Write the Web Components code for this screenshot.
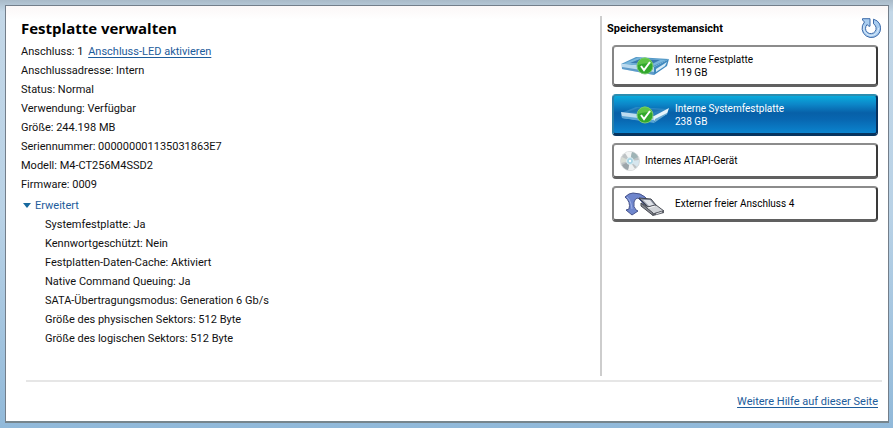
<!DOCTYPE html>
<html lang="de">
<head>
<meta charset="utf-8">
<meta name="viewport" content="width=device-width, initial-scale=1">
<title>Festplatte verwalten</title>
<style>
    html {
        height: 100%;
    }

    body {
        box-sizing: border-box;
        min-height: 100%;
        margin: 0;
        padding: 5px 4px 5px 5px;
        display: flex;
        font: 11px/19px Roboto, "Open Sans", sans-serif;
        color: #111;
        background: linear-gradient(#a9bac8, #c3d7e7 12px, #b9d2e6 50%, #91b9d9);
    }
</style>
</head>
<body>

<manage-page>
    <disk-details slot="main" heading="Festplatte verwalten">
        <detail-row>Anschluss: 1 <text-link>Anschluss-LED aktivieren</text-link></detail-row>
        <detail-row>Anschlussadresse: Intern</detail-row>
        <detail-row>Status: Normal</detail-row>
        <detail-row>Verwendung: Verfügbar</detail-row>
        <detail-row>Größe: 244.198 MB</detail-row>
        <detail-row>Seriennummer: 000000001135031863E7</detail-row>
        <detail-row>Modell: M4-CT256M4SSD2</detail-row>
        <detail-row>Firmware: 0009</detail-row>
        <expand-section slot="more" label="Erweitert">
            <detail-row>Systemfestplatte: Ja</detail-row>
            <detail-row>Kennwortgeschützt: Nein</detail-row>
            <detail-row>Festplatten-Daten-Cache: Aktiviert</detail-row>
            <detail-row>Native Command Queuing: Ja</detail-row>
            <detail-row>SATA-Übertragungsmodus: Generation 6 Gb/s</detail-row>
            <detail-row>Größe des physischen Sektors: 512 Byte</detail-row>
            <detail-row>Größe des logischen Sektors: 512 Byte</detail-row>
        </expand-section>
    </disk-details>

    <storage-view slot="side" heading="Speichersystemansicht">
        <device-tile icon="disk" size="119 GB">Interne Festplatte</device-tile>
        <device-tile icon="systemdisk" size="238 GB" selected>Interne Systemfestplatte</device-tile>
        <device-tile icon="disc">Internes ATAPI-Gerät</device-tile>
        <device-tile icon="port">Externer freier Anschluss 4</device-tile>
    </storage-view>

    <text-link slot="footer">Weitere Hilfe auf dieser Seite</text-link>
</manage-page>

<script>
const check = `
    <circle cx="25" cy="12" r="8" fill="#32a82c" stroke="#7cc776"/>
    <path d="M18 11a7 7 0 0 1 14-1q-6-2-14 1z" fill="#6fd052" opacity=".7"/>
    <path d="M21 12l3 4 6-8" fill="none" stroke="#fff" stroke-width="2"/>`;

const icons = {
    disk: `
    <svg width="50" height="24" viewBox="0 0 50 24" aria-hidden="true">
        <path d="M1 10L16 3l33 2-15 8z" fill="#5499c7"/>
        <path d="M3 10l14-6 29 2-13 6z" fill="#79b7dd"/>
        <path d="M10 9l10-4 20 1-8 4z" fill="#3a79af"/>
        <path d="M1 10l33 3v8L2 15z" fill="#b9d9ee"/>
        <path d="M2 13l32 5v3L2 15z" fill="#5e9bca"/>
        <path d="M34 13l15-8-2 7-13 9z" fill="#408abf"/>
        <path d="M36 15l11-7-2 4-9 6z" fill="#d8edf8"/>
        ${check}
    </svg>`,
    systemdisk: `
    <svg width="50" height="24" viewBox="0 0 50 24" aria-hidden="true">
        <path d="M1 10L16 4l33 2-15 7z" fill="#4c9bcf" opacity=".5"/>
        <path d="M8 9l10-4 23 2-9 3z" fill="#186da9" opacity=".6"/>
        <path d="M1 9l33 4v6L2 15z" fill="#bddcf0"/>
        <path d="M2 13l32 4v3L2 15z" fill="#5aa5d5"/>
        <path d="M34 13l15-8-2 6-13 7z" fill="#e5f3fb"/>
        <path d="M35 16l12-6v1l-13 9z" fill="#64a8d1"/>
        ${check}
    </svg>`,
    disc: `
    <svg width="20" height="20" viewBox="0 0 20 20" aria-hidden="true">
        <circle cx="10" cy="10" r="9.5" fill="#bec3c5" stroke="#d9dcdd"/>
        <path d="M10 10L5 2a9 9 0 0 1 7-1z" fill="#f2f4f4"/>
        <path d="M10 10l2-9a9 9 0 0 1 6 5z" fill="#9fb4b6"/>
        <path d="M10 10l9-1a9 9 0 0 1-2 7z" fill="#d7e6ee"/>
        <path d="M10 10l5 8a9 9 0 0 1-7 1z" fill="#eff1f1"/>
        <path d="M10 10l-2 9a9 9 0 0 1-6-5z" fill="#9ca5aa"/>
        <path d="M10 10L1 12a9 9 0 0 1 1-6z" fill="#d9ddd5"/>
        <circle cx="10" cy="10" r="3.5" fill="#a7d5e6" stroke="#e0eef2"/>
        <circle cx="10" cy="10" r="1.2" fill="#fff"/>
    </svg>`,
    port: `
    <svg width="42" height="24" viewBox="0 0 42 24" aria-hidden="true">
        <path d="M1 5Q5 1 9 1q8 0 12 4l8 9-6 1-9-9q-3 0-4 4-1 5 2 8l2 1-6 4-6-5 3-1Q7 10 1 5z" fill="#6f86cd" stroke="#47548c"/>
        <path d="M3 5q4 3 5 12" fill="none" stroke="#9cafe6"/>
        <path d="M15 6l12 1 5 6-8 2z" fill="#8c93a3" stroke="#3f434d"/>
        <path d="M19 8l7 0 4 5-5 1z" fill="#dfe2e8"/>
        <path d="M17 11l7 4 8-2 8 6-11 3z" fill="#d0d3d8" stroke="#4d5058"/>
        <path d="M17 11l12 10v2.500L17 14z" fill="#858991" stroke="#4b4d55"/>
        <path d="M29 21.500l11-3.500v3l-11 3z" fill="#5c5f67"/>
        <path d="M32 22l6-2" stroke="#d6d8dc"/>
        <path d="M24 16l7-2" stroke="#f4f5f7"/>
    </svg>`,
    refresh: `
    <svg width="20" height="20" viewBox="0 0 20 20" aria-hidden="true">
        <path d="M12.500 1.200A9.300 9.300 0 1 1 3.500 4L1.500 2V.7h7.500v7.500H7.700L6.200 6.500A5.300 5.300 0 1 0 12.500 5.800z"
            fill="#a9cdf0" stroke="#3d6aa8" stroke-linejoin="round"/>
        <path d="M3 8a7.400 7.400 0 1 0 14.500 2" fill="none" stroke="#dcecfb"/>
    </svg>`
};

class ManagePage extends HTMLElement {
    constructor() {
        super();
        this.attachShadow({ mode: "open" }).innerHTML = `
        <style>
        :host {
            flex: 1;
            display: flex;
            flex-direction: column;
            min-width: 0;
            border: 1px solid #737e8a;
            border-bottom: 2px solid #76858c;
            background: linear-gradient(#fbf7f7, #fff 14px);
        }

        .columns {
            flex: 1;
            display: grid;
            grid-template-columns: minmax(0, 1fr) 288px;
            padding-top: 10px;
        }

        aside {
            border-left: 2px solid #cdcdcd;
        }

        footer {
            margin: 4px 6px 0 20px;
            padding: 10px 4px;
            border-top: 2px solid #e6e6e6;
            text-align: right;
        }
        </style>
        <div class="columns">
            <main><slot name="main"></slot></main>
            <aside><slot name="side"></slot></aside>
        </div>
        <footer><slot name="footer"></slot></footer>`;
    }
}

class DiskDetails extends HTMLElement {
    connectedCallback() {
        this.attachShadow({ mode: "open" }).innerHTML = `
        <style>
        :host {
            display: block;
            padding-left: 15px;
        }

        h1 {
            margin: 0 0 2px;
            font: bold 15px/24px "Open Sans", "Noto Sans", sans-serif;
            color: #000;
        }

        .more {
            margin-top: 2px;
        }
        </style>
        <h1>${this.getAttribute("heading")}</h1>
        <slot></slot>
        <div class="more"><slot name="more"></slot></div>`;
    }
}

class DetailRow extends HTMLElement {
    constructor() {
        super();
        this.attachShadow({ mode: "open" }).innerHTML = `
        <style>
        :host {
            display: block;
        }

        ::slotted(text-link) {
            margin-left: 2px;
        }
        </style>
        <slot></slot>`;
    }
}

class TextLink extends HTMLElement {
    constructor() {
        super();
        this.attachShadow({ mode: "open" }).innerHTML = `
        <style>
        :host {
            display: inline-block;
        }

        a {
            color: #1d5c9b;
            text-decoration: underline;
            text-underline-offset: 2px;
        }
        </style>
        <a href="#"><slot></slot></a>`;
    }
}

class ExpandSection extends HTMLElement {
    connectedCallback() {
        this.attachShadow({ mode: "open" }).innerHTML = `
        <style>
        :host {
            display: block;
        }

        button {
            display: flex;
            align-items: center;
            gap: 4px;
            padding: 0 0 0 2px;
            border: 0;
            background: none;
            font: inherit;
            color: #1d5c9b;
        }

        .content {
            padding-left: 24px;
        }
        </style>
        <button type="button" aria-expanded="true">
            <svg width="8" height="5" viewBox="0 0 8 5" aria-hidden="true"><path d="M0 0h8L4 5z" fill="#17699f"/></svg>
            ${this.getAttribute("label")}
        </button>
        <div class="content"><slot></slot></div>`;

        const button = this.shadowRoot.querySelector("button");
        button.addEventListener("click", () => {
            const content = this.shadowRoot.querySelector(".content");
            content.hidden = !content.hidden;
            button.setAttribute("aria-expanded", String(!content.hidden));
        });
    }
}

class StorageView extends HTMLElement {
    connectedCallback() {
        this.attachShadow({ mode: "open" }).innerHTML = `
        <style>
        :host {
            display: block;
            padding: 0 10px 0 5px;
        }

        header {
            display: flex;
            justify-content: space-between;
            height: 29px;
            margin-right: -3px;
        }

        h2 {
            margin: 3px 0 0;
            font-size: 11px;
            line-height: 20px;
            color: #000;
        }

        button {
            width: 20px;
            height: 20px;
            margin-top: 2px;
            padding: 0;
            border: 0;
            background: none;
        }

        .tiles {
            display: grid;
            gap: 7px;
            padding-left: 5px;
        }
        </style>
        <header>
            <h2>${this.getAttribute("heading")}</h2>
            <button type="button" aria-label="Aktualisieren">${icons.refresh}</button>
        </header>
        <div class="tiles"><slot></slot></div>`;
    }
}

class DeviceTile extends HTMLElement {
    connectedCallback() {
        const size = this.getAttribute("size");
        const icon = this.getAttribute("icon");
        this.attachShadow({ mode: "open" }).innerHTML = `
        <style>
        :host {
            display: block;
        }

        button {
            box-sizing: border-box;
            display: flex;
            align-items: center;
            width: 100%;
            height: 36px;
            padding: 0 6px;
            border: 2px solid;
            border-color: #8c8c8c #3a3a3a #606060 #858585;
            border-bottom-width: 3px;
            border-radius: 4px;
            background: #fff;
            font: 10px/13px Roboto, "Open Sans", sans-serif;
            color: #000;
            text-align: left;
        }

        button.sized {
            height: 42px;
        }

        :host([selected]) button {
            border-color: #2b8db0 #08305c #06345f #2b7fa8;
            background: linear-gradient(#08b4e2, #0c86c8 25%, #0760a8 45%, #0866b0 60%, #0b8bd5) border-box;
            color: #fff;
        }

        .icon {
            display: flex;
            justify-content: center;
            flex: 0 0 50px;
            margin-right: 5px;
        }

        .icon.disc {
            flex-basis: 20px;
        }

        .size {
            display: block;
        }
        </style>
        <button type="button" class="${size ? "sized" : ""}">
            <span class="icon ${icon}">${icons[icon]}</span>
            <span><slot></slot>${size ? `<span class="size">${size}</span>` : ""}</span>
        </button>`;
    }
}

customElements.define("manage-page", ManagePage);
customElements.define("disk-details", DiskDetails);
customElements.define("detail-row", DetailRow);
customElements.define("text-link", TextLink);
customElements.define("expand-section", ExpandSection);
customElements.define("storage-view", StorageView);
customElements.define("device-tile", DeviceTile);
</script>
</body>
</html>
